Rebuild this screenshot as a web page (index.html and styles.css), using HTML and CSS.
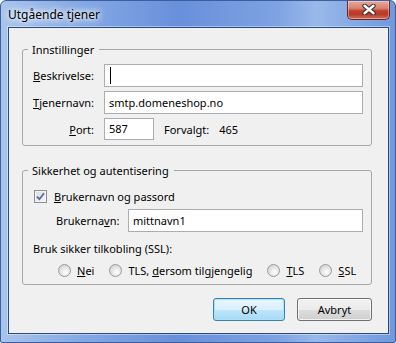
FILE: index.html
```html
<!DOCTYPE html>
<html lang="no">
<head>
    <meta charset="UTF-8">
    <title>Utgående tjener</title>
    <link rel="stylesheet" href="styles.css">
</head>
<body>
    <div class="window">
        <div class="titlebar">
            <span class="title">Utgående tjener</span>
            <span class="close">
                <svg width="14" height="11" viewBox="0 0 14 11">
                    <path d="M2.5 1.8 L11.5 9.2 M11.5 1.8 L2.5 9.2" stroke="#2d2d33" stroke-width="4.4" stroke-linecap="round"/>
                    <path d="M2.5 1.8 L11.5 9.2 M11.5 1.8 L2.5 9.2" stroke="#fff" stroke-width="2.4" stroke-linecap="round"/>
                </svg>
            </span>
        </div>
        <div class="client">
            <fieldset class="group">
                <legend>Innstillinger</legend>
                <div class="form">
                    <label><u>B</u>eskrivelse:</label>
                    <div class="field"><span class="caret"></span></div>
                    <label><u>T</u>jenernavn:</label>
                    <div class="field">smtp.domeneshop.no</div>
                    <label><u>P</u>ort:</label>
                    <div class="portrow">
                        <div class="field port">587</div>
                        <span class="default">Forvalgt:</span>
                        <span class="default">465</span>
                    </div>
                </div>
            </fieldset>

            <fieldset class="group second">
                <legend>Sikkerhet og autentisering</legend>
                <div class="security">
                    <div class="check-row">
                        <span class="checkbox">
                            <svg width="9" height="9" viewBox="0 0 9 9">
                                <path d="M1 4.6 L3.4 7.2 L8 1.2" fill="none" stroke="#5468a3" stroke-width="1.8"/>
                            </svg>
                        </span>
                        <span><u>B</u>rukernavn og passord</span>
                    </div>
                    <div class="user-row">
                        <label>Brukerna<u>v</u>n:</label>
                        <div class="field">mittnavn1</div>
                    </div>
                    <div class="ssl-label">Bruk sikker tilkobling (SSL):</div>
                    <div class="radio-row">
                        <span class="option"><span class="radio"></span><span><u>N</u>ei</span></span>
                        <span class="option"><span class="radio"></span><span>TLS, <u>d</u>ersom tilgjengelig</span></span>
                        <span class="option"><span class="radio"></span><span><u>T</u>LS</span></span>
                        <span class="option"><span class="radio"></span><span><u>S</u>SL</span></span>
                    </div>
                </div>
            </fieldset>

            <div class="buttons">
                <button class="btn default-btn">OK</button>
                <button class="btn">Avbryt</button>
            </div>
        </div>
    </div>
</body>
</html>
```

FILE: styles.css
```css
* { box-sizing: border-box; }
body {
    margin: 0;
    font-family: "Noto Sans", sans-serif;
    font-size: 11px;
    color: #000;
    background: #fff;
}
.window {
    width: 396px;
    height: 343px;
    display: flex;
    flex-direction: column;
    padding: 0 6px 8px 7px;
    border-radius: 6px 6px 2px 2px;
    border: 1px solid #3a5f9c;
    background: linear-gradient(to right, #a9c4ec 0%, #86a9e4 20%, #6890db 45%, #7ea2e2 70%, #9ab9ea 80%, #6f98de 100%);
}
.titlebar {
    height: 26px;
    margin: 0 -6px 0 -7px;
    display: flex;
    align-items: flex-start;
    padding-left: 7px;
}
.title {
    font-size: 12px;
    line-height: 15px;
    margin-top: 6px;
    text-shadow: 0 0 5px #fff, 0 0 8px #fff, 0 0 10px #dfeaf8;
}
.close {
    margin-left: auto;
    margin-right: 5px;
    width: 43px;
    height: 19px;
    display: flex;
    align-items: center;
    justify-content: center;
    border: 1px solid #6b2a28;
    border-top: none;
    border-radius: 0 0 5px 5px;
    background: linear-gradient(#e9a797 0%, #d88270 40%, #c0402c 55%, #b83a28 75%, #d6725c 100%);
    box-shadow: inset 0 0 0 1px rgba(255,255,255,0.35);
}
.close svg { margin-top: -1px; }
.client {
    flex: 1;
    border: 1px solid #2d4b78;
    background: #f0f0f0;
    box-shadow: 0 0 0 1px rgba(255,255,255,0.4);
    display: flex;
    flex-direction: column;
}
.group {
    margin: 14px 16px 0 13px;
    padding: 0;
    border: 1px solid #a7a7a7;
    border-radius: 3px;
    min-width: 0;
}
.group legend {
    margin-left: 5px;
    padding: 0 5px 0 4px;
    line-height: 15px;
}
.second { margin-top: 17px; }
.form {
    display: grid;
    grid-template-columns: 61px 1fr;
    column-gap: 10px;
    row-gap: 4px;
    align-items: center;
    padding: 7px 8px 5px 10px;
}
.form label { text-align: right; }
.field {
    position: relative;
    height: 23px;
    border: 1px solid #abadb3;
    background: #fff;
    padding: 0 4px;
    line-height: 21px;
    white-space: nowrap;
}
.caret {
    position: absolute;
    left: 5px;
    top: 2px;
    width: 1px;
    height: 17px;
    background: #000;
}
.portrow {
    display: flex;
    align-items: center;
}
.port {
    width: 50px;
    height: 22px;
    line-height: 20px;
}
.default { margin-left: 10px; }
.security { padding: 12px 8px 7px 10px; }
.check-row {
    display: flex;
    align-items: center;
    gap: 7px;
    height: 13px;
    margin-left: 1px;
}
.checkbox {
    width: 13px;
    height: 13px;
    display: flex;
    align-items: center;
    justify-content: center;
    border: 1px solid #8e8f8f;
    background: linear-gradient(135deg, #d8dbe0, #f7f7f7);
    box-shadow: inset 0 0 0 1px #f4f4f4;
}
.user-row {
    display: grid;
    grid-template-columns: 62px 1fr;
    column-gap: 10px;
    align-items: center;
    margin-top: 6px;
    padding-left: 23px;
}
.ssl-label {
    margin-top: 9px;
    line-height: 15px;
}
.radio-row {
    display: flex;
    align-items: center;
    gap: 15px;
    height: 13px;
    margin-top: 8px;
    padding-left: 25px;
}
.option {
    display: flex;
    align-items: center;
    gap: 6px;
}
.radio {
    width: 13px;
    height: 13px;
    border-radius: 50%;
    border: 1px solid #9a9a9a;
    background: radial-gradient(circle at 60% 65%, #ffffff 0%, #e6e6e6 45%, #c8c8c8 100%);
}
.buttons {
    display: flex;
    justify-content: flex-end;
    gap: 12px;
    margin: 13px 16px 0 0;
}
.btn {
    height: 23px;
    width: 75px;
    font-family: inherit;
    font-size: 11px;
    color: #000;
    border: 1px solid #707070;
    border-radius: 3px;
    background: linear-gradient(#f2f2f2 0%, #ebebeb 50%, #dddddd 51%, #cfcfcf 100%);
    box-shadow: inset 0 0 0 1px rgba(255,255,255,0.7);
    padding: 0;
}
.default-btn {
    width: 72px;
    border-color: #3c7fb1;
    background: linear-gradient(#eaf6fd 0%, #d9f0fc 50%, #bee6fd 51%, #a7d9f5 100%);
    box-shadow: inset 0 0 0 1px #a8e3f9;
}
```
